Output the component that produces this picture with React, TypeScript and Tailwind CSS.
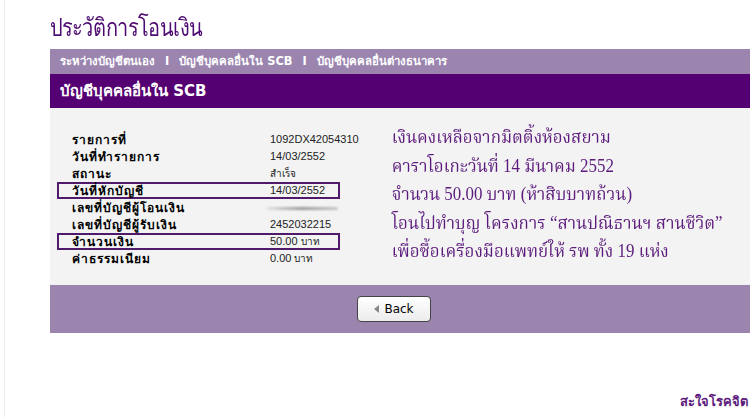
import React from "react";

const rows: { label: string; value: React.ReactNode; boxed?: boolean }[] = [
  { label: "รายการที่", value: "1092DX42054310" },
  { label: "วันที่ทำรายการ", value: "14/03/2552" },
  { label: "สถานะ", value: <span className="text-[10px]">สำเร็จ</span> },
  { label: "วันที่หักบัญชี", value: "14/03/2552", boxed: true },
  {
    label: "เลขที่บัญชีผู้โอนเงิน",
    value: (
      <span className="block h-[3px] w-[72px] -ml-[4px] mt-[1px] rounded-full bg-gradient-to-r from-[#e4e4e4] via-[#9a9a9a] to-[#c8c8c8] blur-[1px]" />
    ),
  },
  { label: "เลขที่บัญชีผู้รับเงิน", value: "2452032215" },
  {
    label: "จำนวนเงิน",
    value: (
      <span>
        50.00 <span className="text-[10px]">บาท</span>
      </span>
    ),
    boxed: true,
  },
  {
    label: "ค่าธรรมเนียม",
    value: (
      <span>
        0.00 <span className="text-[10px]">บาท</span>
      </span>
    ),
  },
];

export default function App() {
  return (
    <div
      className="w-[756px] h-[417px] bg-white flex overflow-hidden"
      style={{ fontFamily: "Tahoma, 'DejaVu Sans', 'Noto Sans', sans-serif" }}
    >
      <div className="w-[4px] shrink-0" />
      <div className="w-px shrink-0 bg-[#ececec]" />
      <div className="flex-1 pl-[45px] pr-[6px] flex flex-col">
        <div className="h-[49px] pt-[11px]">
          <div
            className="text-[25px] leading-[30px] text-[#4e0b72] tracking-[-0.5px] origin-left scale-x-[0.8] whitespace-nowrap"
            style={{ fontFamily: "'Noto Sans', 'Liberation Sans', sans-serif" }}
          >
            ประวัติการโอนเงิน
          </div>
        </div>
        <div className="h-[25px] bg-[#9b85af] flex items-center pl-[10px] text-white text-[11.4px] font-bold whitespace-nowrap">
          <span>ระหว่างบัญชีตนเอง</span>
          <span className="mx-[10px]">I</span>
          <span>บัญชีบุคคลอื่นใน SCB</span>
          <span className="mx-[10px]">I</span>
          <span>บัญชีบุคคลอื่นต่างธนาคาร</span>
        </div>
        <div className="h-[34px] bg-[#550072] flex items-center pl-[10px] text-white text-[15px] font-bold">
          บัญชีบุคคลอื่นใน SCB
        </div>
        <div className="h-[177px] bg-[#f3f3f3] flex pt-[23px]">
          <div className="w-[290px] pl-[7px] flex flex-col">
            {rows.map((r, i) => (
              <div
                key={i}
                className={
                  "h-[17px] flex items-center " +
                  (r.boxed ? "border-2 border-[#4f1a6c] pl-[13px] w-[283px]" : "pl-[15px]")
                }
              >
                <span className="w-[198px] font-bold text-black text-[12px] tracking-[1px] shrink-0 whitespace-nowrap">
                  {r.label}
                </span>
                <span
                  className="text-[#222] text-[11px]"
                  style={{ fontFamily: "'Liberation Sans', Tahoma, sans-serif" }}
                >
                  {r.value}
                </span>
              </div>
            ))}
          </div>
          <div
            className="pl-[55px] -mt-[8px] text-[#5b1a7c] text-[18px] leading-[28.5px] whitespace-nowrap origin-left scale-x-[0.94]"
            style={{ fontFamily: "'Liberation Serif', 'Noto Serif Thai', serif" }}
          >
            <div>เงินคงเหลือจากมิตติ้งห้องสยาม</div>
            <div>คาราโอเกะวันที่ 14 มีนาคม 2552</div>
            <div>จำนวน 50.00 บาท (ห้าสิบบาทถ้วน)</div>
            <div>โอนไปทำบุญ โครงการ “สานปณิธานฯ สานชีวิต”</div>
            <div>เพื่อซื้อเครื่องมือแพทย์ให้ รพ ทั้ง 19 แห่ง</div>
          </div>
        </div>
        <div className="h-[48px] bg-[#9b85af] flex items-center justify-center">
          <button className="mr-[12px] w-[74px] h-[26px] rounded-[4px] border border-[#444] bg-gradient-to-b from-white to-[#ececec] flex items-center justify-center gap-[5px] text-[12px] text-black">
            <svg width="5" height="8" viewBox="0 0 5 8">
              <path d="M5 0 L0 4 L5 8 Z" fill="#888" />
            </svg>
            <span>Back</span>
          </button>
        </div>
        <div className="flex-1 flex items-end justify-end pb-[6px] pr-[2px]">
          <span className="text-[#5b1a7c] text-[13px] font-bold">สะใจโรคจิต</span>
        </div>
      </div>
    </div>
  );
}
